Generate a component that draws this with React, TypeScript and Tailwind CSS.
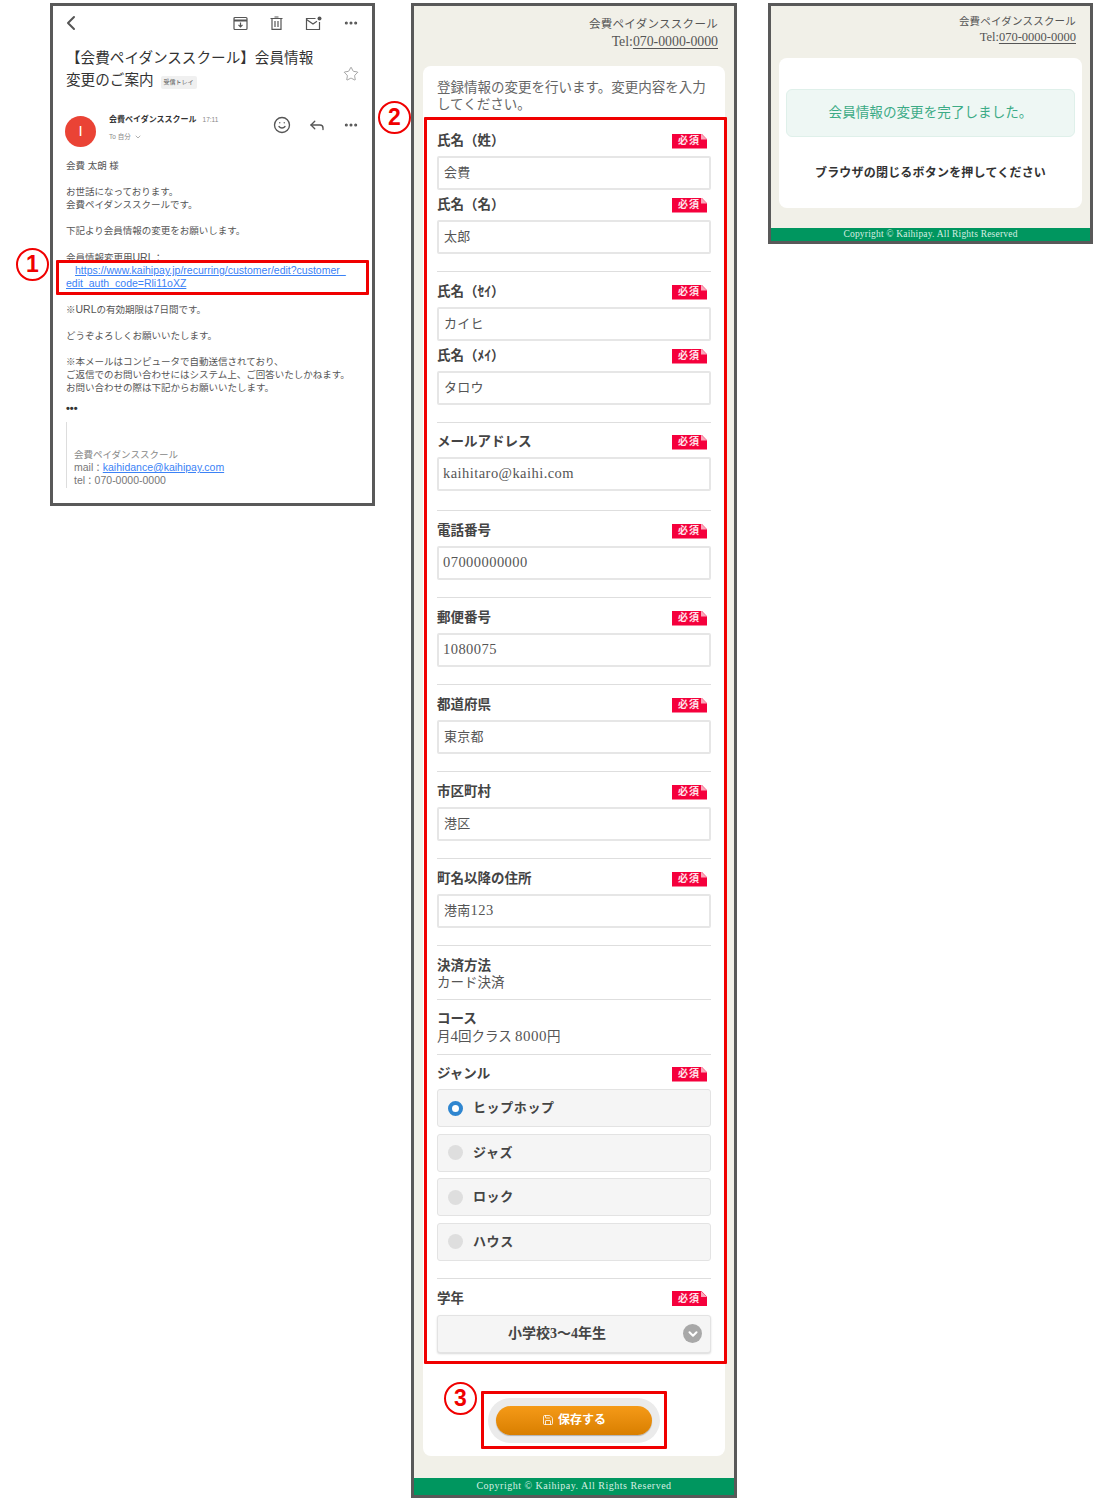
import { ChevronDown, ChevronLeft, Ellipsis, Reply, Save, Smile, Star } from 'lucide-react';

const serif = "font-['Liberation_Serif','Noto_Sans_CJK_JP',serif]";
const sans = "font-['Liberation_Sans','Noto_Sans_CJK_JP',sans-serif]";
const latin = 'text-[10.5px] leading-[13px]';

function Required() {
  return (
    <span className="relative flex h-[15px] w-[35px] items-center pl-[6px] bg-[#f5003c] [clip-path:polygon(0_0,84%_0,100%_38%,100%_100%,0_100%)]">
      <span className="text-[10px] leading-none font-bold tracking-[1px] text-white/90">必須</span>
      <span className="absolute right-0 top-0 h-[6px] w-[6px] bg-[#f9a8bb] [clip-path:polygon(0_0,100%_100%,0_100%)]" />
    </span>
  );
}

function LabelRow({ label }: { label: string }) {
  return (
    <div className="flex h-4 items-center justify-between pr-[4px]">
      <span className="text-[13.5px] leading-4 font-bold text-[#444]">{label}</span>
      <Required />
    </div>
  );
}

function Input({ value, wide, digits }: { value: string; wide?: boolean; digits?: string }) {
  return (
    <div
      className={
        wide
          ? 'mt-[7px] flex h-[34px] items-center rounded-[2px] border-2 border-[#e6e6e6] bg-white pl-[4px] text-[14.5px] tracking-[0.45px] text-[#555]'
          : 'mt-[7px] flex h-[34px] items-center rounded-[2px] border-2 border-[#e6e6e6] bg-white pl-[5px] text-[13px] tracking-[0.3px] text-[#555]'
      }
    >
      {value}
      {digits && <span className="text-[14.5px] tracking-[0.45px]">{digits}</span>}
    </div>
  );
}

function Section({ label, value, wide, tall, digits }: { label: string; value: string; wide?: boolean; tall?: boolean; digits?: string }) {
  return (
    <div className={tall ? 'border-b border-[#dedede] pt-[11px] pb-[19px]' : 'border-b border-[#dedede] pt-[12px] pb-[17px]'}>
      <LabelRow label={label} />
      <Input value={value} wide={wide} digits={digits} />
    </div>
  );
}

function Radio({ label, checked }: { label: string; checked?: boolean }) {
  return (
    <div className="flex h-[38px] items-center gap-[10px] rounded-[3px] border border-[#e3e3e3] bg-[#f5f5f5] pl-[10px] text-[13px] font-bold tracking-[0.6px] text-[#444]">
      <span
        className={
          checked
            ? 'h-[15px] w-[15px] rounded-full border-[4px] border-[#2f86d0] bg-white'
            : 'h-[15px] w-[15px] rounded-full bg-[#dedede]'
        }
      />
      {label}
    </div>
  );
}

function Footer({ small }: { small?: boolean }) {
  return (
    <div
      className={
        small
          ? 'h-[13px] bg-[#00965f] text-center text-[9.5px] leading-[13px] tracking-[0.2px] text-[#d6efe3]'
          : 'h-[17px] bg-[#00965f] text-center text-[10px] leading-[16px] tracking-[0.5px] text-[#d6efe3]'
      }
    >
      Copyright © Kaihipay. All Rights Reserved
    </div>
  );
}

function ArchiveIcon() {
  return (
    <svg width="15" height="15" viewBox="0 0 15 15" fill="none" stroke="#555" strokeWidth="1.2">
      <rect x="1" y="1.5" width="13" height="12" rx="1" />
      <path d="M1 4.5h13" strokeWidth="2" />
      <path d="M7.5 6.5v4M5.5 8.8l2 2 2-2" />
    </svg>
  );
}

function TrashIcon() {
  return (
    <svg width="15" height="15" viewBox="0 0 15 15" fill="none" stroke="#555" strokeWidth="1.2">
      <path d="M1.5 2.5h12M3 2.5v10.8h9V2.5M5.5 1h4" />
      <path d="M6 5v6M9 5v6" />
    </svg>
  );
}

function MailDotIcon() {
  return (
    <svg width="17" height="15" viewBox="0 0 17 15" fill="none" stroke="#555" strokeWidth="1.2">
      <path d="M10.5 2.5H1.5v11h13V6" />
      <path d="M1.5 3.5l6.5 4.5 4-2.8" />
      <circle cx="14.5" cy="2.5" r="2" fill="#555" stroke="none" />
    </svg>
  );
}

function MailPanel() {
  return (
    <div className={`h-[503px] w-[325px] shrink-0 border-[3px] border-[#595959] bg-white ${sans}`}>
      <div className="flex h-[34px] items-center pl-[6px] pr-[13px] text-[#555]">
        <ChevronLeft size={24} strokeWidth={2} />
        <div className="ml-auto flex items-center gap-[21px]">
          <ArchiveIcon />
          <TrashIcon />
          <MailDotIcon />
          <Ellipsis size={16} strokeWidth={2.6} />
        </div>
      </div>
      <div className="flex items-end pl-[13px] pr-[13px] pt-[7px]">
        <div className="w-[262px] text-[14.6px] leading-[22px] text-[#333]">
          【会費ペイダンススクール】会員情報
          <br />
          変更のご案内
          <span className="ml-[7px] inline-block h-[13px] rounded-[2px] bg-[#f0f0f0] px-[3px] align-[1px] text-[6px] leading-[13px] text-[#555]">受信トレイ</span>
        </div>
        <Star size={16} strokeWidth={1} className="mb-[9px] ml-auto text-[#777]" />
      </div>
      <div className="flex pl-[12px] pr-[13px] pt-[25px]">
        <div className="flex h-[31px] w-[31px] items-center justify-center rounded-full bg-[#ea4335] text-[15px] font-light text-white">I</div>
        <div className="ml-[13px] -mt-[2px]">
          <div className="text-[8px] leading-[12px] font-bold text-[#333]">
            会費ペイダンススクール
            <span className="ml-[6px] text-[6.5px] font-normal text-[#888]">17:11</span>
          </div>
          <div className="mt-[6px] flex items-center text-[6.5px] leading-[10px] text-[#888]">
            To 自分
            <ChevronDown size={8} className="ml-[3px]" />
          </div>
        </div>
        <div className="ml-auto flex h-[14px] items-center gap-[17px] pt-[3px] text-[#555]">
          <Smile size={18} strokeWidth={1.8} />
          <Reply size={18} strokeWidth={1.8} />
          <Ellipsis size={16} strokeWidth={2.6} />
        </div>
      </div>
      <div className="pl-[13px] pr-[8px] pt-[12px] text-[9.5px] leading-[13px] text-[#555]">
        <p>会費 太朗 様</p>
        <p className="mt-[13px]">お世話になっております。</p>
        <p>会費ペイダンススクールです。</p>
        <p className="mt-[13px]">下記より会員情報の変更をお願いします。</p>
        <p className="mt-[14px] h-[13px]">
          会員情報変更用<span className={latin}>URL</span>：
        </p>
        <p className={`h-[26px] whitespace-nowrap text-[#3b82f6] underline ${latin}`}>
          <span className="ml-[9px]">https://www.kaihipay.jp/recurring/customer/edit?customer_</span>
          <br />
          edit_auth_code=Rli11oXZ
        </p>
        <p className="mt-[13px] h-[13px]">
          ※<span className={latin}>URL</span>の有効期限は<span className={latin}>7</span>日間です。
        </p>
        <p className="mt-[13px]">どうぞよろしくお願いいたします。</p>
        <p className="mt-[13px]">※本メールはコンピュータで自動送信されており、</p>
        <p>ご返信でのお問い合わせにはシステム上、ご回答いたしかねます。</p>
        <p>お問い合わせの際は下記からお願いいたします。</p>
        <p className="mt-[8px] text-[11px] font-bold leading-[13px] text-[#333]">•••</p>
        <div className="mt-[7px] h-[66px] border-l border-[#ddd] pl-[7px] pt-[26px] text-[#777]">
          <p className="h-[13px] text-[#888]">会費ペイダンススクール</p>
          <p className="h-[13px]">
            <span className={latin}>mail</span>：<span className={`text-[#3b82f6] underline ${latin}`}>kaihidance@kaihipay.com</span>
          </p>
          <p className="h-[13px]">
            <span className={latin}>tel</span>：<span className={latin}>070-0000-0000</span>
          </p>
        </div>
      </div>
    </div>
  );
}

function FormPanel() {
  return (
    <div className={`ml-[36px] w-[326px] shrink-0 border-[3px] border-[#595959] bg-[#f1f0e8] ${serif}`}>
      <div className="pr-[16px] pt-[10px] text-right text-[#555]">
        <div className="text-[11.5px] leading-[17px] tracking-[0.3px]">会費ペイダンススクール</div>
        <div className="text-[13.8px] leading-[18px]">
          Tel:<span className="underline underline-offset-2">070-0000-0000</span>
        </div>
      </div>
      <div className="mx-[9px] mt-[15px] w-[302px] rounded-[8px] bg-white px-[14px] pt-[13px] pb-[13px]">
        <p className="text-[13.5px] leading-[17px] text-[#666]">登録情報の変更を行います。変更内容を入力してください。</p>
        <div className="pt-[20px]">
          <LabelRow label="氏名（姓）" />
          <Input value="会費" />
        </div>
        <div className="border-b border-[#dedede] pt-[7px] pb-[17px]">
          <LabelRow label="氏名（名）" />
          <Input value="太郎" />
        </div>
        <div className="pt-[12px]">
          <LabelRow label="氏名（ｾｲ）" />
          <Input value="カイヒ" />
        </div>
        <div className="border-b border-[#dedede] pt-[7px] pb-[17px]">
          <LabelRow label="氏名（ﾒｲ）" />
          <Input value="タロウ" />
        </div>
        <Section label="メールアドレス" value="kaihitaro@kaihi.com" wide tall />
        <Section label="電話番号" value="07000000000" wide />
        <Section label="郵便番号" value="1080075" wide />
        <Section label="都道府県" value="東京都" />
        <Section label="市区町村" value="港区" />
        <Section label="町名以降の住所" value="港南" digits="123" />
        <div className="border-b border-[#dedede] pt-[11px] pb-[8px] text-[13.5px] leading-[17px] text-[#555]">
          <div className="font-bold text-[#444]">決済方法</div>
          <div>カード決済</div>
        </div>
        <div className="border-b border-[#dedede] pt-[10px] pb-[9px] text-[13.5px] leading-[18px] text-[#555]">
          <div className="h-[17px] font-bold text-[#444]">コース</div>
          <div className="h-[18px]">
            月<span className="text-[15px] leading-[18px]">4</span>回クラス <span className="text-[15px] leading-[18px] tracking-[0.5px]">8000</span>円
          </div>
        </div>
        <div className="border-b border-[#dedede] pt-[11px] pb-[17px]">
          <LabelRow label="ジャンル" />
          <div className="mt-[7px] flex flex-col gap-[6.5px]">
            <Radio label="ヒップホップ" checked />
            <Radio label="ジャズ" />
            <Radio label="ロック" />
            <Radio label="ハウス" />
          </div>
        </div>
        <div className="pt-[12px]">
          <LabelRow label="学年" />
          <div className="mt-[8px] flex h-[38px] items-center justify-between rounded-[3px] border border-[#e3e3e3] bg-[#f5f5f5] pr-[8px] pl-[70px] text-[14px] font-bold text-[#444] shadow-[0_1px_2px_rgba(0,0,0,0.15)]">
            小学校3〜4年生
            <span className="flex h-[19px] w-[19px] items-center justify-center rounded-full bg-[#a8a8a8]">
              <ChevronDown size={14} strokeWidth={3.5} className="text-white" />
            </span>
          </div>
        </div>
        <div className="mt-[45px] ml-[51px] flex h-[45px] w-[172px] items-center justify-center rounded-full bg-[#ebebeb]">
          <div className={`flex h-[29px] w-[156px] items-center justify-center gap-[4px] rounded-full bg-gradient-to-b from-[#f59a17] to-[#d97f00] text-[12px] font-bold text-white shadow-[0_1px_1px_rgba(0,0,0,0.25)] ${sans}`}>
            <Save size={12} strokeWidth={1.6} />
            保存する
          </div>
        </div>
      </div>
      <div className="h-[22px]" />
      <Footer />
    </div>
  );
}

function DonePanel() {
  return (
    <div className={`ml-[31px] w-[325px] shrink-0 border-[3px] border-[#595959] bg-[#f1f0e8] ${serif}`}>
      <div className="pr-[14px] pt-[8px] text-right text-[#555]">
        <div className="text-[10.5px] leading-[15px] tracking-[0.2px]">会費ペイダンススクール</div>
        <div className="text-[12.5px] leading-[16px]">
          Tel:<span className="underline underline-offset-2">070-0000-0000</span>
        </div>
      </div>
      <div className="mx-[8px] mt-[13px] h-[150px] w-[303px] rounded-[8px] bg-white px-[7px] pt-[31px]">
        <div className="flex h-[48px] items-center justify-center rounded-[6px] border border-[#dff0ea] bg-[#eef7f4] pt-[1px] text-[13.6px] text-[#3cab86]">
          会員情報の変更を完了しました。
        </div>
        <div className="mt-[27px] text-center text-[12px] leading-[18px] font-bold tracking-[0.2px] text-[#333]">
          ブラウザの閉じるボタンを押してください
        </div>
      </div>
      <div className="h-[20px]" />
      <Footer small />
    </div>
  );
}

function Callout({ className }: { className: string }) {
  return <div className={`absolute rounded-[1px] border-[3px] border-[#f00000] ${className}`} />;
}

function Mark({ n, className }: { n: string; className: string }) {
  return (
    <div className={`absolute flex h-[33px] w-[33px] items-center justify-center rounded-full border-[2px] border-[#f00000] bg-white text-[23px] leading-none font-bold text-[#f00000] ${sans} ${className}`}>
      {n}
    </div>
  );
}

export default function App() {
  return (
    <div className="relative h-[1503px] w-[1097px] overflow-hidden bg-white">
      <div className="flex items-start pt-[3px] pl-[50px]">
        <MailPanel />
        <FormPanel />
        <DonePanel />
      </div>
      <Callout className="left-[56px] top-[260px] h-[35px] w-[313px]" />
      <Callout className="left-[424px] top-[117px] h-[1247px] w-[303px]" />
      <Callout className="left-[481px] top-[1391px] h-[58px] w-[186px]" />
      <Mark n="1" className="left-[16px] top-[248px]" />
      <Mark n="2" className="left-[378px] top-[101px]" />
      <Mark n="3" className="left-[444px] top-[1382px]" />
    </div>
  );
}
